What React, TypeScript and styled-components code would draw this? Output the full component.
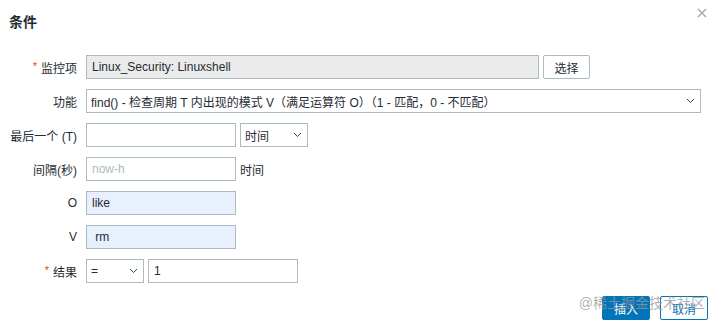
import React from "react";
import styled, { createGlobalStyle } from "styled-components";

const GlobalStyle = createGlobalStyle`
    html, body { margin: 0; padding: 0; background: #fff; }
    body {
        font-family: "Liberation Sans", Arial, "Noto Sans CJK SC", sans-serif;
        font-size: 12px;
        color: #1f2c33;
    }
`;

const Dialog = styled.div`
    position: relative;
    width: 714px;
    height: 329px;
    background: #fff;
    box-sizing: border-box;
`;

const Header = styled.div`
    display: flex;
    align-items: center;
    justify-content: space-between;
    height: 42px;
    padding: 0 5px 0 9px;
`;

const Title = styled.h4`
    margin: 0;
    font-size: 14px;
    font-weight: bold;
    color: #1f2c33;
`;

const CloseBtn = styled.button`
    background: none;
    border: none;
    padding: 0;
    width: 14px;
    height: 14px;
    margin-top: -16px;
    cursor: pointer;
    display: flex;
    align-items: center;
    justify-content: center;
`;

const Form = styled.div`
    display: grid;
    grid-template-columns: 77px 1fr;
    column-gap: 9px;
    row-gap: 10px;
    padding-top: 13px;
`;

const Label = styled.label`
    display: flex;
    align-items: center;
    justify-content: flex-end;
    height: 24px;
    white-space: nowrap;
    color: #1f2c33;
`;

const Star = styled.span`
    color: #e54700;
    font-size: 11px;
    margin-right: 4px;
    position: relative;
    top: -1px;
`;

const Cell = styled.div`
    display: flex;
    align-items: center;
    gap: 4px;
    height: 24px;
`;

const Field = styled.input<{ $w: number; $bg?: string }>`
    box-sizing: border-box;
    width: ${p => p.$w}px;
    height: 24px;
    border: 1px solid #acbbc2;
    background: ${p => p.$bg || "#fff"};
    color: #1f2c33;
    font: inherit;
    padding: 0 5px;
    margin: 0;
    outline: none;
    &::placeholder { color: #acbbc2; }
`;

const Select = styled.div<{ $w: number }>`
    box-sizing: border-box;
    width: ${p => p.$w}px;
    height: 24px;
    border: 1px solid #acbbc2;
    background: #fff;
    display: flex;
    align-items: center;
    justify-content: space-between;
    padding: 0 5px 0 4px;
    white-space: nowrap;
    overflow: hidden;
`;

const Text = styled.span`
    color: #1f2c33;
`;

const Button = styled.button<{ $primary?: boolean; $outline?: boolean }>`
    box-sizing: border-box;
    width: 48px;
    height: 24px;
    padding: 0;
    font: inherit;
    font-size: 12px;
    border-radius: 2px;
    cursor: pointer;
    border: 1px solid ${p => (p.$primary || p.$outline ? "#0275b8" : "#acbbc2")};
    background: ${p => (p.$primary ? "#0275b8" : "#fff")};
    color: ${p => (p.$primary ? "#fff" : p.$outline ? "#0275b8" : "#1f2c33")};
`;

const Footer = styled.div`
    display: flex;
    justify-content: flex-end;
    gap: 10px;
    padding: 13px 6px 0 0;
`;

const Watermark = styled.div`
    position: absolute;
    right: 9px;
    top: 292px;
    font-size: 14px;
    color: rgba(150, 150, 150, 0.75);
    pointer-events: none;
    white-space: nowrap;
`;

function Chevron() {
    return (
        <svg width="9" height="6" viewBox="0 0 9 6">
            <path d="M1 1 L4.5 4.5 L8 1" fill="none" stroke="#3a464d" strokeWidth="1" />
        </svg>
    );
}

export default function App() {
    return (
        <Dialog>
            <GlobalStyle />
            <Header>
                <Title>条件</Title>
                <CloseBtn title="关闭">
                    <svg width="10" height="10" viewBox="0 0 10 10">
                        <path d="M1 1 L9 9 M9 1 L1 9" stroke="#acacac" strokeWidth="1.6" />
                    </svg>
                </CloseBtn>
            </Header>

            <Form>
                <Label><Star>*</Star>监控项</Label>
                <Cell>
                    <Field $w={453} $bg="#ebebeb" readOnly defaultValue="Linux_Security: Linuxshell" />
                    <Button style={{ width: 47 }}>选择</Button>
                </Cell>

                <Label>功能</Label>
                <Cell>
                    <Select $w={615}>
                        <Text>find() - 检查周期 T 内出现的模式 V（满足运算符 O）（1 - 匹配，0 - 不匹配）</Text>
                        <Chevron />
                    </Select>
                </Cell>

                <Label>最后一个 (T)</Label>
                <Cell>
                    <Field $w={150} readOnly defaultValue="" />
                    <Select $w={68}>
                        <Text>时间</Text>
                        <Chevron />
                    </Select>
                </Cell>

                <Label>间隔(秒)</Label>
                <Cell>
                    <Field $w={150} readOnly placeholder="now-h" />
                    <Text>时间</Text>
                </Cell>

                <Label>O</Label>
                <Cell>
                    <Field $w={150} $bg="#e8f0fe" readOnly defaultValue="like" />
                </Cell>

                <Label>V</Label>
                <Cell>
                    <Field $w={150} $bg="#e8f0fe" readOnly defaultValue=" rm" />
                </Cell>

                <Label><Star>*</Star>结果</Label>
                <Cell>
                    <Select $w={58}>
                        <Text>=</Text>
                        <Chevron />
                    </Select>
                    <Field $w={150} readOnly defaultValue="1" />
                </Cell>
            </Form>

            <Footer>
                <Button $primary>插入</Button>
                <Button $outline>取消</Button>
            </Footer>

            <Watermark>@稀土掘金技术社区</Watermark>
        </Dialog>
    );
}
